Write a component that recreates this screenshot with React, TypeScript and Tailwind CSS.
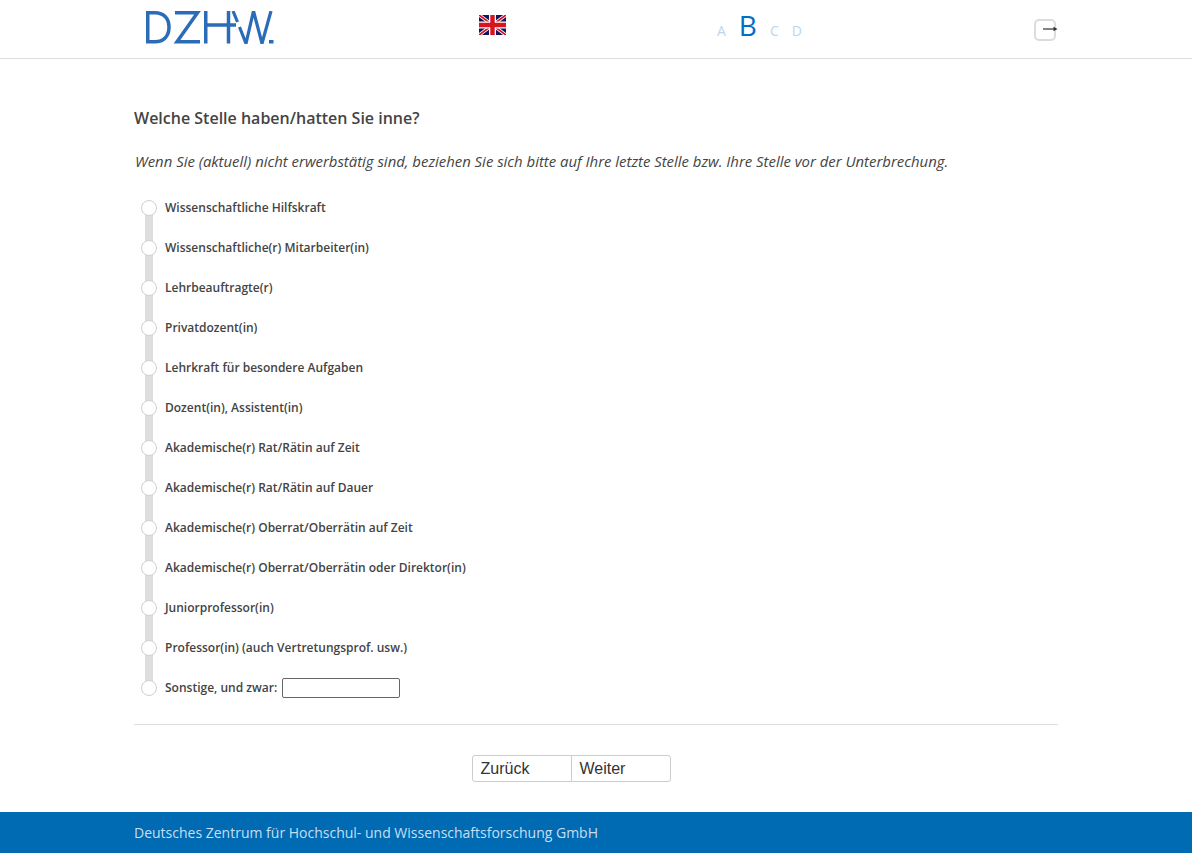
const OPTIONS = [
  'Wissenschaftliche Hilfskraft',
  'Wissenschaftliche(r) Mitarbeiter(in)',
  'Lehrbeauftragte(r)',
  'Privatdozent(in)',
  'Lehrkraft für besondere Aufgaben',
  'Dozent(in), Assistent(in)',
  'Akademische(r) Rat/Rätin auf Zeit',
  'Akademische(r) Rat/Rätin auf Dauer',
  'Akademische(r) Oberrat/Oberrätin auf Zeit',
  'Akademische(r) Oberrat/Oberrätin oder Direktor(in)',
  'Juniorprofessor(in)',
  'Professor(in) (auch Vertretungsprof. usw.)',
];

function Logo() {
  return (
    <svg width="128" height="33" viewBox="0 0 128 33" fill="none" stroke="#2b6cb8" strokeWidth="3.500" className="block">
      <path d="M1.750 0v32.500M0 1.750h9c9 0 14 6 14 14.500s-5 14.500-14 14.500H0" />
      <path d="M29 1.750h22.500L31 30.750h23" />
      <path d="M59.750 0v32.500M82.500 0v32.500M58 14h32" />
      <path d="M87 0l4.500 11M93.500 16L100 32.500 107.500 0l8.500 32.500L125 0" strokeWidth="3.200" />
      <path d="M123 29h4.500v3.500H123z" fill="#2b6cb8" stroke="none" />
    </svg>
  );
}

function UkFlag() {
  return (
    <svg width="27" height="20" viewBox="0 0 27 20" className="block">
      <rect width="27" height="20" fill="#14145f" />
      <path d="M0 0l27 20M27 0L0 20" stroke="#fff" strokeWidth="3.400" />
      <path d="M0 0l27 20M27 0L0 20" stroke="#d8141f" strokeWidth="1.800" />
      <path d="M13.500 0v20M0 10h27" stroke="#fff" strokeWidth="7" />
      <path d="M13.500 0v20M0 10h27" stroke="#d8141f" strokeWidth="4.400" />
    </svg>
  );
}

function LogoutIcon() {
  return (
    <div className="relative h-[22px] w-[22px] rounded-[5px] border-2 border-[#dcdcdc] bg-white">
      <svg width="16" height="8" viewBox="0 0 16 8" className="absolute left-[7px] top-[4px] overflow-visible">
        <path d="M0 4h11" stroke="#333" strokeWidth="1.200" />
        <path d="M10.500 1.800L14.500 4l-4 2.200z" fill="#333" />
      </svg>
    </div>
  );
}

function Radio() {
  return <span className="relative z-10 h-4 w-4 shrink-0 rounded-full border border-[#cfcfcf] bg-white" />;
}

function Row({ last, children }: { last?: boolean; children: React.ReactNode }) {
  return (
    <li className="relative flex h-10 items-center gap-2 pl-[7px]">
      {!last ? <span className="absolute left-[11px] top-5 h-10 w-2 bg-[#dedede]" /> : null}
      <Radio />
      {children}
    </li>
  );
}

export default function App() {
  return (
    <div className="min-h-[862px] bg-white font-['Open_Sans',sans-serif] text-[#444]">
      <header className="h-[59px] border-b border-[#dedede]">
        <div className="mx-auto flex h-full w-[924px] items-start">
          <div className="ml-[12px] mt-[11px] w-[333px]">
            <Logo />
          </div>
          <div className="mt-[15px] w-[238px]">
            <UkFlag />
          </div>
          <div className="flex h-[41px] w-[317px] items-end gap-[13px] text-[14px] leading-[20px] text-[#b9d6ee]">
            <span>A</span>
            <span className="relative top-[2px] text-[28px] font-medium leading-[36px] text-[#0070c4]">B</span>
            <span>C</span>
            <span>D</span>
          </div>
          <div className="mt-[19px]">
            <LogoutIcon />
          </div>
        </div>
      </header>

      <main className="mx-auto w-[924px]">
        <h1 className="mt-[47px] text-[16px] font-semibold leading-[24px]">Welche Stelle haben/hatten Sie inne?</h1>
        <p className="mt-[21px] pl-px text-[14.9px] italic leading-[20px]">
          Wenn Sie (aktuell) nicht erwerbstätig sind, beziehen Sie sich bitte auf Ihre letzte Stelle bzw. Ihre Stelle vor der Unterbrechung.
        </p>

        <ul className="mt-[17px] text-[12px] font-semibold">
          {OPTIONS.map((option) => (
            <Row key={option}>{option}</Row>
          ))}
          <Row last>
            <span>Sonstige, und zwar:</span>
            <input type="text" className="-ml-[3px] h-5 w-[118px] rounded-[2px] border border-[#666] bg-white" />
          </Row>
        </ul>

        <hr className="mt-[16px] border-[#dedede]" />

        <div className="mt-[30px] mr-[50px] flex justify-center font-['Liberation_Sans',sans-serif] text-[16px]">
          <button className="h-[27px] w-[100px] rounded-l-[3px] border border-[#ccc] bg-white pl-2 text-left text-[#333]">Zurück</button>
          <button className="-ml-px h-[27px] w-[100px] rounded-r-[3px] border border-[#ccc] bg-white pl-2 text-left text-[#333]">Weiter</button>
        </div>
      </main>

      <footer className="mt-[30px] h-[41px] bg-[#006ab3]">
        <div className="mx-auto w-[924px] text-[14px] leading-[41px] text-[#c6dff2]">
          Deutsches Zentrum für Hochschul- und Wissenschaftsforschung GmbH
        </div>
      </footer>
    </div>
  );
}
